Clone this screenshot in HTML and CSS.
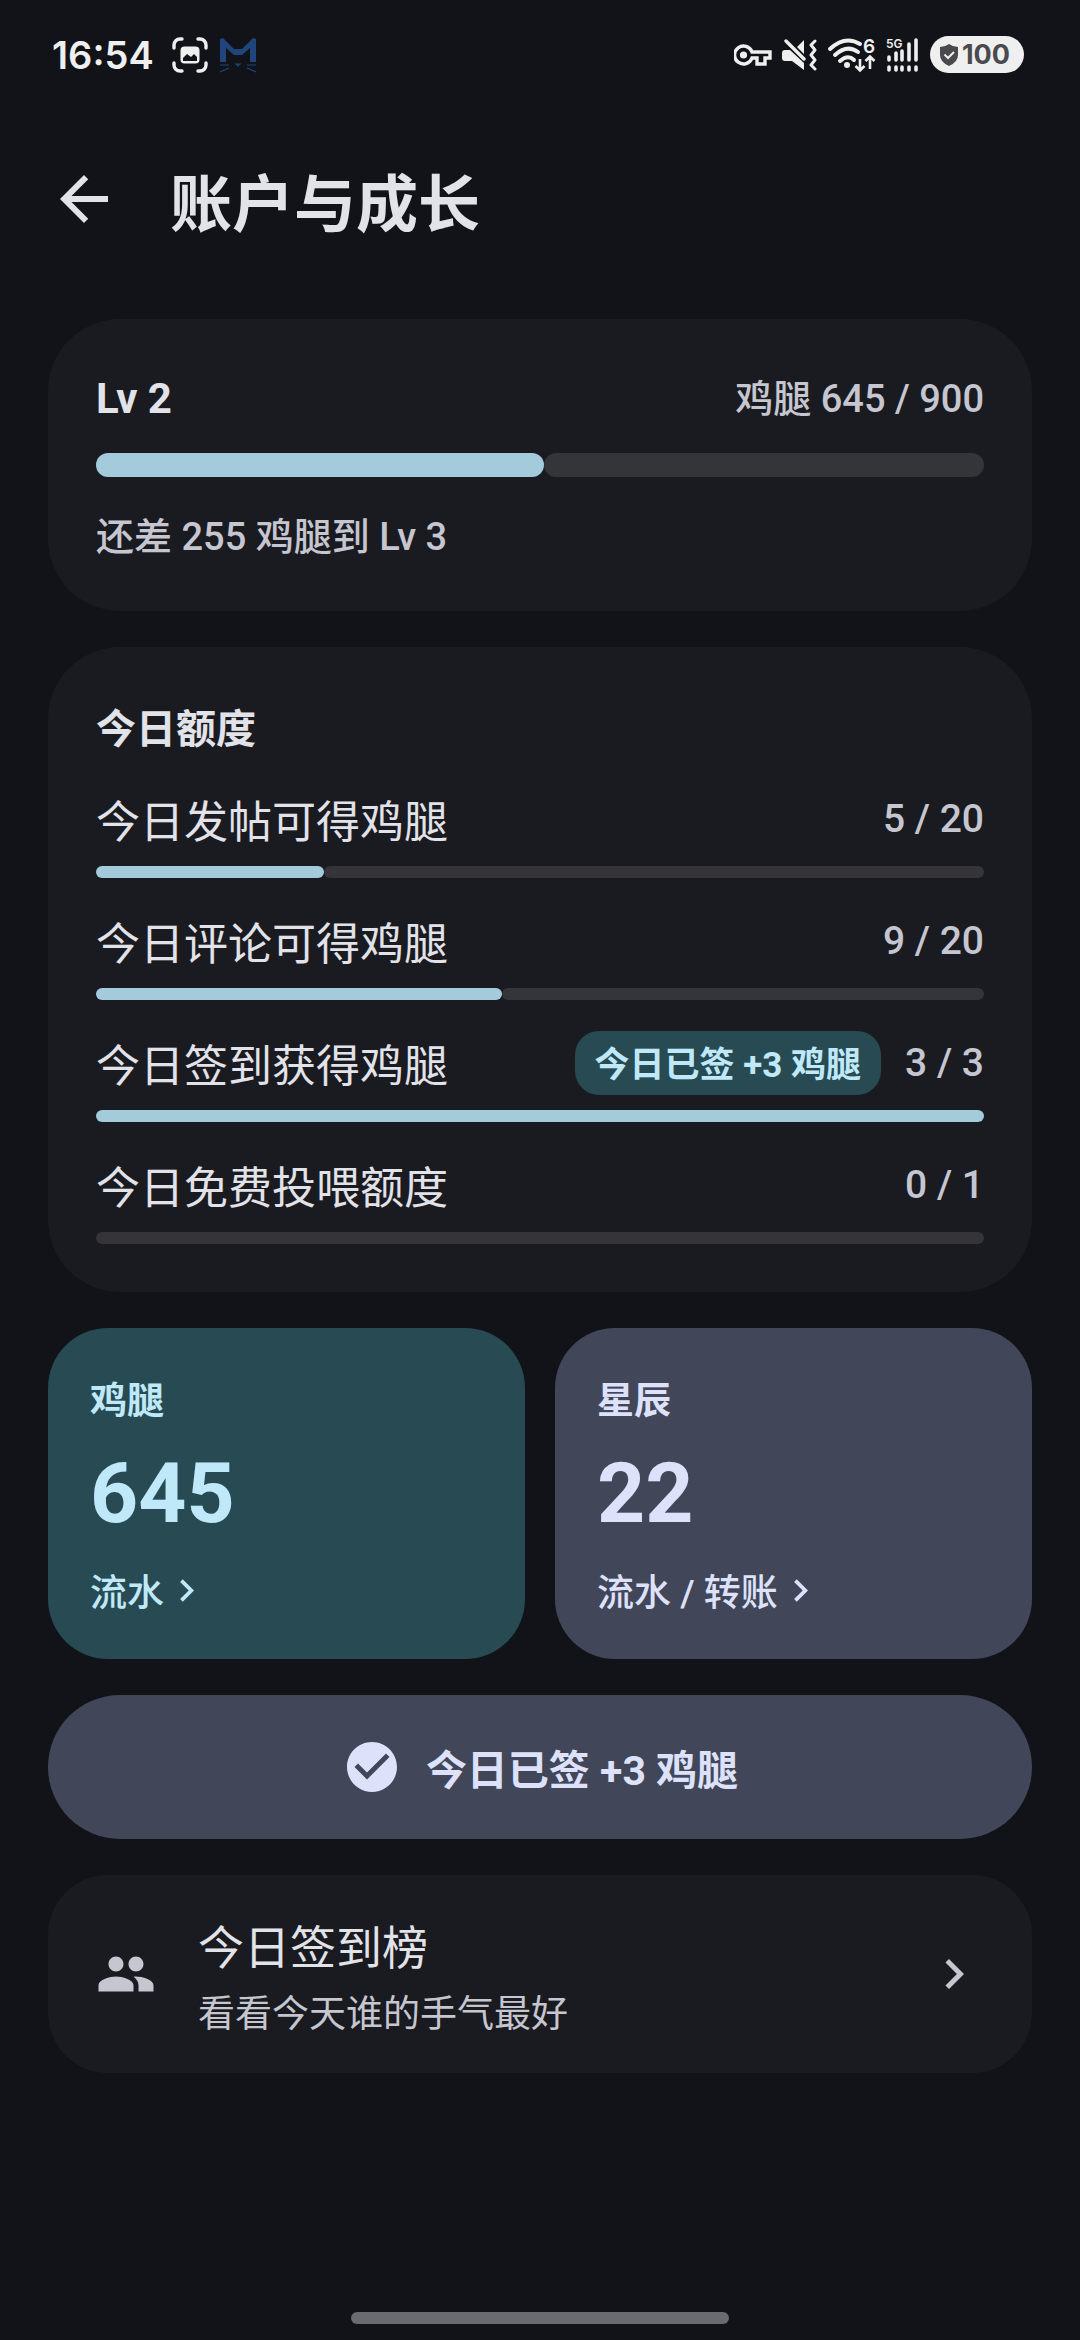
FILE: index.html
```html
<!DOCTYPE html>
<html lang="zh-CN">
<head>
<meta charset="utf-8">
<meta name="viewport" content="width=device-width, initial-scale=1">
<title>账户与成长</title>
<link rel="stylesheet" href="styles.css">
</head>
<body>
<div class="screen">
  <div class="status">
    <div class="status-left">
      <span class="clock">16:54</span>
      <svg class="ic-shot" viewBox="0 0 36 36" aria-hidden="true"><path d="M2 11V8a6 6 0 0 1 6-6h2M26 2h2a6 6 0 0 1 6 6v3M34 26v2a6 6 0 0 1-6 6h-2M10 34H8a6 6 0 0 1-6-6v-2" fill="none" stroke="#efefef" stroke-width="3.4" stroke-linecap="round"/><rect x="8.500" y="9.500" width="19" height="17" rx="4" fill="#efefef"/><path d="M11 24v-3l4-4 4 3 3-3 3 3v4z" fill="#111318"/></svg>
      <svg class="ic-cat" viewBox="0 0 36 36" aria-hidden="true"><path d="M0 25V2l3-1 11 11h8L33 1l3 1v23h-6V11l-8 7h-8l-8-7v14z" fill="#1f457c"/><path d="M0 28h9M27 28h9M0 35l9-4M36 35l-9-4M16 27h4l-2 2z" fill="none" stroke="#1f457c" stroke-width="1.200"/></svg>
    </div>
    <div class="status-right">
      <svg class="ic-key" viewBox="0 0 38 22" aria-hidden="true"><path d="M18 8a9 9 0 1 0 0 6h5v6h8v-6h5V8z" fill="none" stroke="#efefef" stroke-width="3.400"/><circle cx="9.500" cy="11" r="3.600" fill="#efefef"/></svg>
      <svg class="ic-mute" viewBox="0 0 36 32" aria-hidden="true"><path d="M0 14q0-3 3-3h5l14 13v7L10 22H3q-3 0-3-3zM15 8l7-7v14z" fill="#efefef"/><path d="M4 2l18 18" stroke="#efefef" stroke-width="3.400" stroke-linecap="round"/><path d="M33 2l-4 4 4 5-4 5 4 5-4 5 4 4" fill="none" stroke="#efefef" stroke-width="3" stroke-linecap="round" stroke-linejoin="round"/></svg>
      <svg class="ic-wifi" viewBox="0 0 48 40" aria-hidden="true"><path d="M2 14Q17 0 32 9M7 20q12-11 23-3M12 26q8-7 14-1" fill="none" stroke="#efefef" stroke-width="4" stroke-linecap="round"/><circle cx="19" cy="30" r="3" fill="#efefef"/><path d="M32 24v12M27.500 31l4.500 4.500 4.500-4.500M42 34V22M37.500 26l4.500-4.500 4.500 4.500" fill="none" stroke="#efefef" stroke-width="2.600"/><text x="35" y="18" class="svg-six">6</text></svg>
      <svg class="ic-cell" viewBox="0 0 34 40" aria-hidden="true"><path d="M3 25v-3M10 25v-7M16 25v-9M23 25V9M30 25V5M3 32v3M10 32v3M16 32v3M23 32v3M30 32v3" stroke="#efefef" stroke-width="3.600" stroke-linecap="round"/><text x="0" y="13" class="svg-5g">5G</text></svg>
      <span class="battery"><svg viewBox="0 0 20 22" aria-hidden="true"><path d="M10 0q4 3 9 3v8q0 7-9 11Q1 18 1 11V3q5 0 9-3z" fill="#4a4a4e"/><path d="M5.500 10.500l3.500 3.500 6-6" fill="none" stroke="#efefef" stroke-width="2"/></svg>100</span>
    </div>
  </div>

  <header class="topbar">
    <button class="back" type="button" aria-label="返回"><svg viewBox="0 0 24 24"><path d="M20 11H7.830l5.590-5.590L12 4l-8 8 8 8 1.410-1.410L7.830 13H20v-2z"/></svg></button>
    <h1>账户与成长</h1>
  </header>

  <main>
    <section class="card level">
      <div class="row">
        <h2>Lv 2</h2>
        <span class="value">鸡腿 645 / 900</span>
      </div>
      <div class="bar thick"><div class="fill" style="width:50.400%"></div><div class="rest"></div></div>
      <p class="note">还差 255 鸡腿到 Lv 3</p>
    </section>

    <section class="card">
      <h2 class="quota-title">今日额度</h2>
      <ul class="quotas">
        <li><div class="row"><span class="label">今日发帖可得鸡腿</span><span class="value">5 / 20</span></div>
          <div class="bar"><div class="fill" style="width:25.700%"></div><div class="rest"></div></div></li>
        <li><div class="row"><span class="label">今日评论可得鸡腿</span><span class="value">9 / 20</span></div>
          <div class="bar"><div class="fill" style="width:45.700%"></div><div class="rest"></div></div></li>
        <li><div class="row"><span class="label">今日签到获得鸡腿</span><span class="chip">今日已签 +3 鸡腿</span><span class="value">3 / 3</span></div>
          <div class="bar"><div class="fill" style="width:100%"></div></div></li>
        <li><div class="row"><span class="label">今日免费投喂额度</span><span class="value">0 / 1</span></div>
          <div class="bar"><div class="rest"></div></div></li>
      </ul>
    </section>

    <div class="tiles">
      <a class="tile teal" href="#drumsticks">
        <span class="tile-name">鸡腿</span>
        <span class="tile-num">645</span>
        <span class="tile-link"><span>流水</span><svg viewBox="0 0 24 24" aria-hidden="true"><path d="M10 6L8.590 7.410 13.170 12l-4.580 4.590L10 18l6-6z"/></svg></span>
      </a>
      <a class="tile slate" href="#stars">
        <span class="tile-name">星辰</span>
        <span class="tile-num">22</span>
        <span class="tile-link"><span>流水 / 转账</span><svg viewBox="0 0 24 24" aria-hidden="true"><path d="M10 6L8.590 7.410 13.170 12l-4.580 4.590L10 18l6-6z"/></svg></span>
      </a>
    </div>

    <button class="checkin" type="button">
      <svg viewBox="0 0 24 24" aria-hidden="true"><path d="M12 2C6.480 2 2 6.480 2 12s4.480 10 10 10 10-4.480 10-10S17.520 2 12 2zm-2 15l-5-5 1.410-1.410L10 14.170l7.590-7.590L19 8l-9 9z"/></svg>
      今日已签 +3 鸡腿
    </button>

    <a class="board" href="#board">
      <svg viewBox="0 0 24 24" aria-hidden="true"><path d="M16 11c1.660 0 2.990-1.340 2.990-3S17.660 5 16 5s-3 1.340-3 3 1.340 3 3 3zm-8 0c1.660 0 2.990-1.340 2.990-3S9.660 5 8 5 5 6.340 5 8s1.340 3 3 3zm0 2c-2.330 0-7 1.170-7 3.500V19h14v-2.500c0-2.330-4.670-3.500-7-3.500zm8 0c-.290 0-.620.020-.970.050 1.160.840 1.970 1.970 1.970 3.450V19h6v-2.500c0-2.330-4.670-3.500-7-3.500z"/></svg>
      <span class="board-text"><span class="board-title">今日签到榜</span><span class="board-sub">看看今天谁的手气最好</span></span>
      <svg viewBox="0 0 24 24" aria-hidden="true"><path d="M10 6L8.590 7.410 13.170 12l-4.580 4.590L10 18l6-6z"/></svg>
    </a>
  </main>
  <div class="gesture"></div>
</div>
</body>
</html>
```
FILE: styles.css
```css
* { box-sizing: border-box; }
body {
  margin: 0;
  background: #111318;
  color: #e2e2e9;
  font-family: Roboto, "Noto Sans CJK SC", sans-serif;
}
h1, h2, p, ul { margin: 0; padding: 0; }
ul { list-style: none; }
a { color: inherit; text-decoration: none; }
button { border: 0; padding: 0; font-family: inherit; }
svg { display: block; flex: none; fill: currentColor; }

.screen { min-height: 100vh; display: flex; flex-direction: column; }

/* Status bar */
.status {
  height: 109px;
  padding: 0 56px 0 52px;
  display: flex;
  align-items: center;
  justify-content: space-between;
}
.status-left, .status-right { display: flex; align-items: center; }
.status-left { gap: 12px; color: #efefef; }
.clock { font: 600 38px/48px Inter, sans-serif; margin-right: 6px; }
.ic-shot { width: 36px; height: 36px; }
.ic-cat { width: 36px; height: 36px; }
.status-right { gap: 10px; }
.ic-key { width: 38px; height: 22px; }
.ic-mute { width: 36px; height: 32px; }
.ic-wifi { width: 48px; height: 40px; overflow: visible; }
.ic-cell { width: 34px; height: 40px; overflow: visible; }
.svg-six { font: 600 19px Inter, sans-serif; }
.svg-5g { font: 600 12px Inter, sans-serif; }
.status-right svg text { fill: #efefef; }
.battery {
  height: 37px;
  padding: 0 14px 0 9px;
  border-radius: 19px;
  background: #efefef;
  color: #4a4a4e;
  display: flex;
  align-items: center;
  gap: 3px;
  font: 700 27px/37px Inter, sans-serif;
}
.battery svg { width: 20px; height: 22px; }

/* Title bar */
.topbar {
  height: 180px;
  padding: 0 48px;
  display: flex;
  align-items: center;
  gap: 50px;
}
.back { background: none; color: #e2e2e9; }
.back svg { width: 72px; height: 72px; }
h1 { padding-top: 14px; font-size: 62px; font-weight: 700; line-height: 84px; }

main {
  padding: 30px 48px 0;
  display: flex;
  flex-direction: column;
  gap: 36px;
}

/* Cards */
.card { padding: 48px; border-radius: 72px; background: #1a1b20; }
.row { display: flex; align-items: center; gap: 24px; }
.row > :first-child { flex: 1; }
h2 { font-size: 40px; font-weight: 700; line-height: 66px; }
.value { color: #c5c6d0; font-size: 39px; line-height: 60px; font-weight: 500; }
.level { padding-bottom: 42px; }
.level h2 { font-size: 42px; line-height: 64px; }
.level .value, .note { font-size: 38px; line-height: 64px; font-weight: 500; color: #c5c6d0; }
.level .bar { margin: 22px 0 28px; }

.bar { display: flex; height: 12px; }
.bar.thick { height: 24px; }
.fill, .rest { border-radius: 12px; }
.fill { background: #a3cbdb; }
.rest { flex: 1; background: #353439; }

.quota-title { padding-top: 2px; margin-bottom: 24px; }
.quotas { display: flex; flex-direction: column; gap: 31px; }
.quotas .row { height: 64px; margin-bottom: 15px; }
.label { padding-top: 8px; font-size: 44px; line-height: 64px; }
.chip {
  padding: 6px 20px 0;
  border-radius: 24px;
  background: #284a53;
  color: #bfe8f9;
  font-size: 35px;
  font-weight: 700;
  line-height: 58px;
}

/* Balance tiles */
.tiles { display: grid; grid-template-columns: 1fr 1fr; gap: 30px; }
.tile {
  padding: 42px;
  border-radius: 60px;
  display: flex;
  flex-direction: column;
  gap: 17px;
}
.teal { background: #284a53; color: #bfe8f9; }
.slate { background: #414659; color: #dde1f9; }
.tile-name { padding-top: 5px; font-size: 37px; font-weight: 700; line-height: 54px; }
.tile-num { font-size: 84px; font-weight: 700; line-height: 95px; }
.tile-link { display: flex; align-items: center; padding-top: 5px; font-size: 37px; font-weight: 500; }
.tile-link span { padding-top: 8px; line-height: 46px; }
.tile-link svg { width: 45px; height: 45px; }

.checkin {
  min-height: 144px;
  border-radius: 72px;
  background: #414659;
  color: #dde1f9;
  display: flex;
  align-items: center;
  justify-content: center;
  gap: 24px;
  font-size: 41px;
  font-weight: 700;
}
.checkin svg { width: 60px; height: 60px; }

.board {
  padding: 30px 48px;
  border-radius: 60px;
  background: #1a1b20;
  display: flex;
  align-items: center;
  gap: 42px;
}
.board svg { width: 60px; height: 60px; color: #c5c6d0; }
.board-text { flex: 1; display: flex; flex-direction: column; }
.board-title { padding-top: 4px; font-size: 46px; line-height: 78px; }
.board-sub { font-size: 37px; line-height: 56px; color: #c5c6d0; }

.gesture {
  width: 35%;
  height: 12px;
  margin: auto auto 16px;
  border-radius: 6px;
  background: #6a6b6e;
}
```
